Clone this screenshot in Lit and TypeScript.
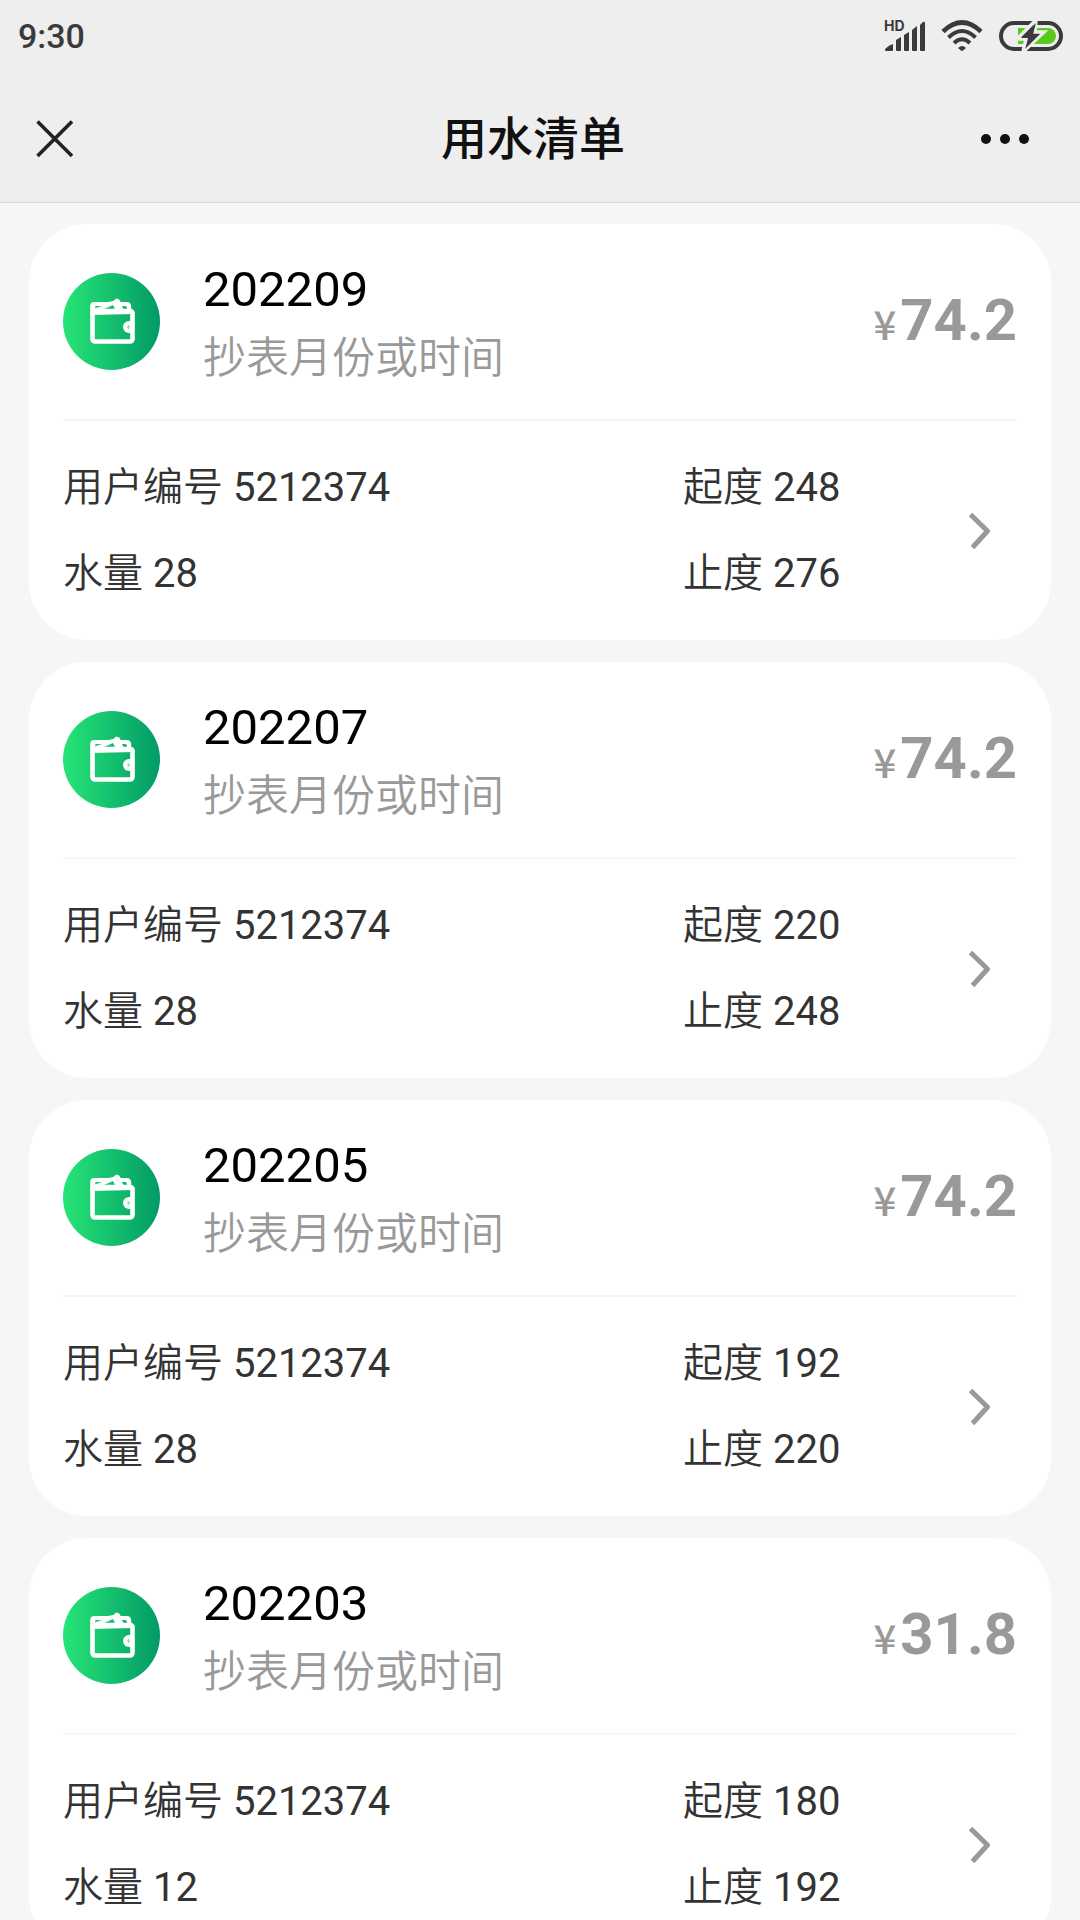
import { LitElement, html, css } from "lit";
import { customElement, property } from "lit/decorators.js";

interface Bill {
  month: string;
  amount: string;
  user: string;
  volume: number;
  start: number;
  end: number;
}

const BILLS: Bill[] = [
  { month: "202209", amount: "74.2", user: "5212374", volume: 28, start: 248, end: 276 },
  { month: "202207", amount: "74.2", user: "5212374", volume: 28, start: 220, end: 248 },
  { month: "202205", amount: "74.2", user: "5212374", volume: 28, start: 192, end: 220 },
  { month: "202203", amount: "31.8", user: "5212374", volume: 12, start: 180, end: 192 },
];

@customElement("status-bar")
export class StatusBar extends LitElement {
  static styles = css`
    :host {
      display: flex;
      align-items: center;
      justify-content: space-between;
      height: 72px;
      padding: 0 16px 0 18px;
      color: #3a3a3a;
    }
    .time {
      font-size: 34px;
      font-weight: 500;
      line-height: 40px;
    }
    .icons {
      display: flex;
      align-items: center;
      gap: 15px;
    }
    svg {
      display: block;
      overflow: visible;
    }
    .hd {
      font: 700 14px "Inter", sans-serif;
    }
  `;

  render() {
    return html`
      <span class="time">9:30</span>
      <div class="icons">
        <svg width="42" height="36" viewBox="0 0 42 36" fill="#3a3a3a" aria-hidden="true">
          <text class="hd" x="0" y="13">HD</text>
          <path d="M1 32v-1q4-4 8-5v6q0 1-1 1H2q-1 0-1-1z" />
          <path d="M12 22l5-3v13q0 1-1 1h-3q-1 0-1-1z" />
          <path d="M20 17l5-3v18q0 1-1 1h-3q-1 0-1-1z" />
          <path d="M28 12l5-4v24q0 1-1 1h-3q-1 0-1-1z" />
          <path d="M36 7l3-3q2-1 2 1v27q0 1-1 1h-3q-1 0-1-1z" />
        </svg>
        <svg width="42" height="32" viewBox="0 0 42 32" fill="none" stroke="#3a3a3a" stroke-width="4" aria-hidden="true">
          <path d="M2 11.500Q21-6.500 40 11.500" stroke-width="4.600" />
          <path d="M7.500 17.500Q21 4.500 34.500 17.500" />
          <path d="M13 23Q21 15.500 29 23" />
          <path d="M17 28q4-4 8 0l-3 2.500q-1 .8-2 0z" fill="#3a3a3a" stroke="none" />
        </svg>
        <svg width="66" height="32" viewBox="0 0 66 32" aria-hidden="true">
          <rect x="3" y="3" width="60" height="26" rx="13" fill="#eee" stroke="#3a3a3a" stroke-width="4" />
          <path d="M20 8h30a8 8 0 0 1 0 16H20z" fill="#5bc81e" />
          <path d="M38 0L19 19h9l-3 13 21-20H37z" fill="#3a3a3a" stroke="#eee" stroke-width="3.500" />
          <path d="M38 3L23 18h8l-4 11 15-15H35z" fill="#3a3a3a" />
        </svg>
      </div>
    `;
  }
}

@customElement("bill-card")
export class BillCard extends LitElement {
  @property({ attribute: false }) bill!: Bill;

  static styles = css`
    :host {
      display: block;
      flex: none;
      padding: 0 34px;
      border-radius: 58px;
      background: #fff;
    }
    .summary {
      display: flex;
      align-items: center;
      gap: 42px;
      height: 195px;
      border-bottom: 2px solid #f6f6f6;
    }
    svg {
      display: block;
      flex: none;
    }
    .heading {
      flex: 1;
      padding-top: 4px;
    }
    .month {
      margin: 0;
      font-size: 49px;
      font-weight: 400;
      line-height: 68px;
      color: #000;
    }
    .caption {
      margin: 0;
      font-size: 43px;
      font-weight: 350;
      line-height: 68px;
      color: #999;
    }
    .amount {
      display: flex;
      align-items: baseline;
      gap: 4px;
      color: #999;
      font-size: 58px;
      font-weight: 700;
      line-height: 68px;
    }
    .currency {
      font-family: "Noto Sans CJK SC", sans-serif;
      font-size: 40px;
      font-weight: 500;
    }
    .details {
      display: grid;
      grid-template-columns: 65% 1fr auto;
      align-items: center;
      padding: 24px 0 23px;
      color: #333;
    }
    .details p {
      margin: 0;
      font-size: 40px;
      line-height: 86px;
      white-space: nowrap;
    }
    .label {
      font-weight: 350;
    }
    .open {
      padding: 0 22px 0 0;
      border: 0;
      background: none;
      cursor: pointer;
    }
  `;

  render() {
    const b = this.bill;
    return html`
      <div class="summary">
        <svg width="98" height="98" viewBox="0 0 98 98" aria-hidden="true">
          <defs>
            <linearGradient id="fill" x1="0" x2="1" y1="0" y2="0">
              <stop offset="0" stop-color="#27e576" />
              <stop offset="1" stop-color="#029a66" />
            </linearGradient>
          </defs>
          <circle cx="48.500" cy="48.500" r="48.500" fill="url(#fill)" />
          <rect x="29.500" y="38" width="40" height="30.500" rx="2.500" fill="none" stroke="#fff" stroke-width="4.600" />
          <path
            fill="#fff"
            fill-rule="evenodd"
            d="M27.200 42v-9q0-4 4-4h14l5-1 3-2.500 3 1 1.500 2.500h6q4 0 4.500 4v3q3.500 1 3.600 5zM32 35.500l7-2.500h-6.500zM41 36h11l-2-4zM59 33l1.500 3H64q0-3-2-3z"
          />
          <path d="M71 48h-5a6 6 0 0 0 0 12h5z" fill="#fff" />
          <ellipse cx="65.500" cy="54" rx="1.200" ry="2" fill="#8fdcba" />
        </svg>
        <div class="heading">
          <h2 class="month">${b.month}</h2>
          <p class="caption">抄表月份或时间</p>
        </div>
        <div class="amount"><span class="currency">¥</span><span>${b.amount}</span></div>
      </div>
      <div class="details">
        <div>
          <p><span class="label">用户编号</span> ${b.user}</p>
          <p><span class="label">水量</span> ${b.volume}</p>
        </div>
        <div>
          <p><span class="label">起度</span> ${b.start}</p>
          <p><span class="label">止度</span> ${b.end}</p>
        </div>
        <button class="open" type="button" aria-label="${b.month}">
          <svg width="28" height="40" viewBox="0 0 28 40" fill="none" stroke="#999" stroke-width="5">
            <path d="M3.500 3.500L20.500 20 5.500 36.500" stroke-linejoin="round" />
          </svg>
        </button>
      </div>
    `;
  }
}

@customElement("app-root")
export class AppRoot extends LitElement {
  static styles = css`
    :host {
      display: flex;
      flex-direction: column;
      height: 100vh;
      background: #f6f6f6;
      font-family: Roboto, "Noto Sans CJK SC", sans-serif;
    }
    .top {
      flex: none;
      background: #eee;
      border-bottom: 1px solid #d8d8d8;
    }
    .nav {
      display: grid;
      grid-template-columns: 1fr auto 1fr;
      align-items: center;
      height: 126px;
      padding: 4px 50px 0 36px;
    }
    .title {
      margin: 0;
      font-size: 46px;
      font-weight: 500;
      line-height: 64px;
      color: #111;
    }
    .action {
      padding: 0;
      border: 0;
      background: none;
      cursor: pointer;
    }
    .more {
      justify-self: end;
    }
    svg {
      display: block;
    }
    .list {
      flex: 1;
      min-height: 0;
      display: flex;
      flex-direction: column;
      gap: 22px;
      padding: 21px 29px;
      overflow-y: auto;
      scrollbar-width: none;
    }
  `;

  render() {
    return html`
      <header class="top">
        <status-bar></status-bar>
        <nav class="nav">
          <button class="action" type="button" aria-label="关闭">
            <svg width="38" height="38" viewBox="0 0 38 38" stroke="#222" stroke-width="3.600">
              <path d="M1.500 1.500l34.500 34.500M36 1.500L1.500 36" />
            </svg>
          </button>
          <h1 class="title">用水清单</h1>
          <button class="action more" type="button" aria-label="更多">
            <svg width="50" height="12" viewBox="0 0 50 12" fill="#111">
              <circle cx="6" cy="6" r="5" />
              <circle cx="25" cy="6" r="5" />
              <circle cx="44" cy="6" r="5" />
            </svg>
          </button>
        </nav>
      </header>
      <main class="list">${BILLS.map((b) => html`<bill-card .bill=${b}></bill-card>`)}</main>
    `;
  }
}
